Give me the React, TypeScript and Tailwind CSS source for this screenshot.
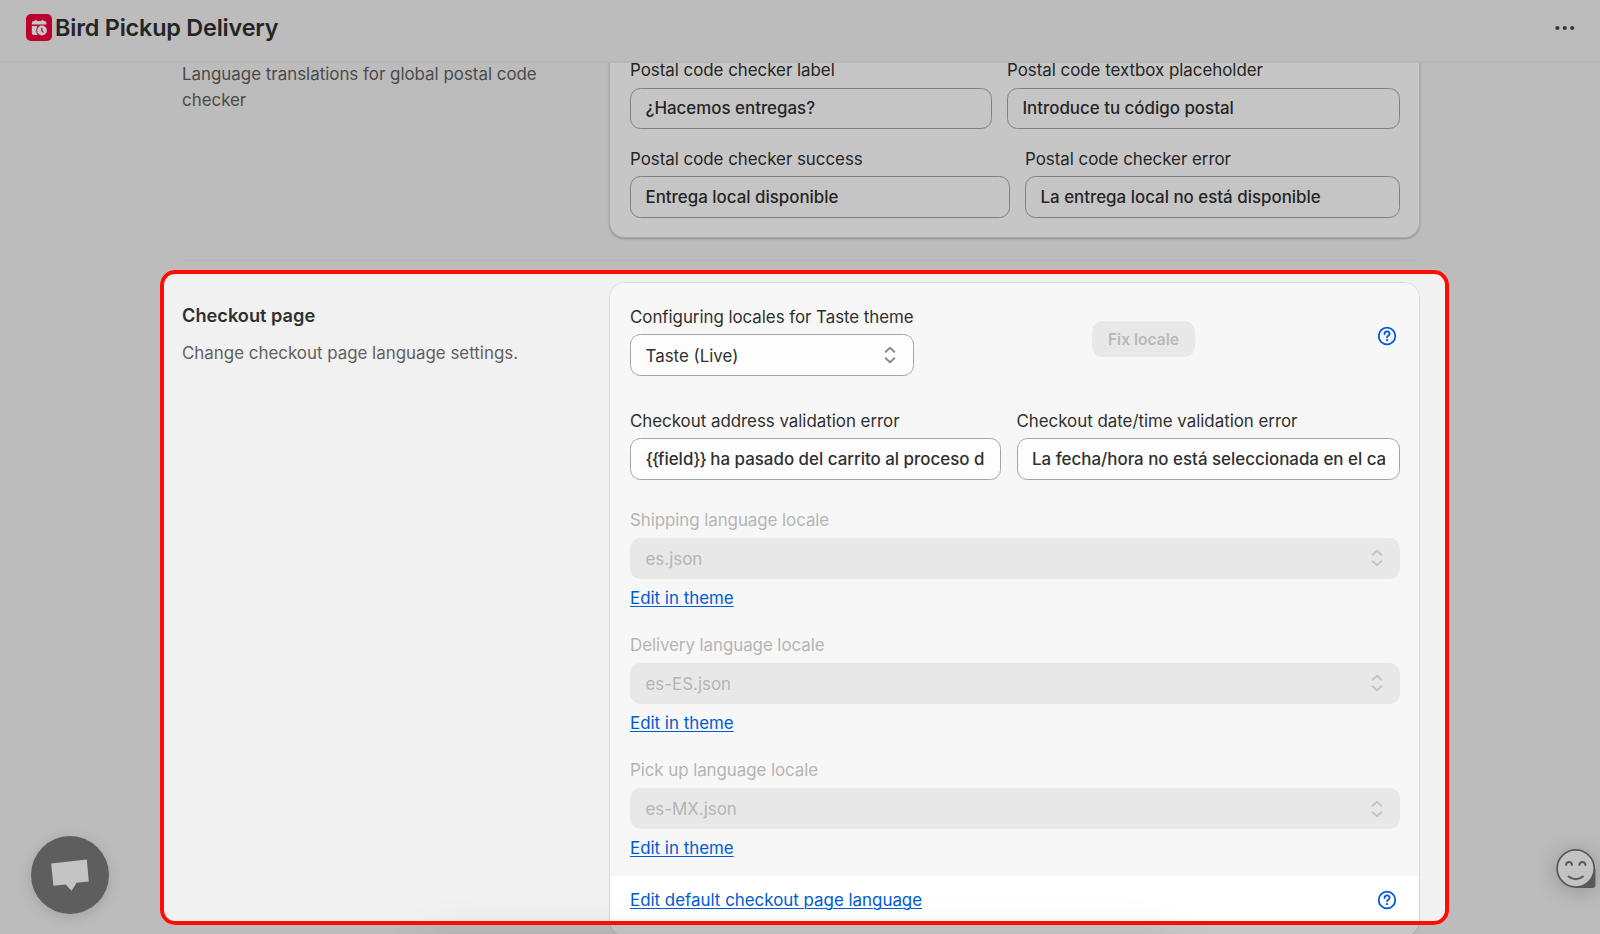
import type { ReactNode } from "react";

function SelectChevrons() {
  return (
    <svg width="12" height="18" viewBox="0 0 12 18" fill="none" stroke="currentColor" strokeWidth="1.9" strokeLinecap="round" strokeLinejoin="round" className="shrink-0">
      <path d="M1.7 5.8 6 1.7l4.3 4.1M1.7 12.2 6 16.3l4.3-4.1" />
    </svg>
  );
}

function HelpIcon() {
  return (
    <svg width="20" height="20" viewBox="0 0 20 20" fill="none" stroke="#005bd3" strokeLinecap="round" strokeLinejoin="round">
      <circle cx="10" cy="10" r="8.3" strokeWidth="1.8" />
      <path d="M7.5 8C7.5 4.6 12.6 4.7 12.6 7.8c0 2-2.5 1.9-2.5 3.5" strokeWidth="1.8" />
      <circle cx="10.05" cy="14.1" r="1.15" fill="#005bd3" stroke="none" />
    </svg>
  );
}

function Logo() {
  return (
    <svg width="26" height="27" viewBox="0 0 26 27">
      <rect width="26" height="27" rx="5" fill="#f4003f" />
      <path d="M5.8 10.6V9q0-2 2-2h1v-.4q0-.8.9-.8t.9.8V7h5v-.4q0-.8.9-.8t.9.8V7h1q2 0 2 2v1.6z" fill="#fff" />
      <path d="M5.8 12h5.6q-2.6 5 .4 9H7.8q-2 0-2-2z" fill="#fff" />
      <circle cx="16" cy="16.5" r="4.9" fill="#fff" />
      <path d="M15.8 14.4v2.4l1.4 1.3" fill="none" stroke="#f4003f" strokeWidth="1.2" strokeLinecap="round" />
    </svg>
  );
}

function Field({ label, value, className }: { label: string; value: ReactNode; className: string }) {
  return (
    <div className={`${className} flex shrink-0 flex-col gap-[4.6px]`}>
      <div className="whitespace-nowrap tracking-[-0.02px]">{label}</div>
      <div className="flex h-[41.6px] items-center rounded-[10.4px] border border-[#a3a4a6] bg-[#fdfdfd] px-[14.5px]">
        <div className="w-full overflow-hidden whitespace-nowrap font-[500]">{value}</div>
      </div>
    </div>
  );
}

function Link({ children }: { children: ReactNode }) {
  return (
    <a href="#" className="self-start whitespace-nowrap text-[#005bd3] underline decoration-[1.3px] underline-offset-[2px]">
      {children}
    </a>
  );
}

function LocaleField({ label, value }: { label: string; value: string }) {
  return (
    <div className="flex flex-col">
      <div className="tracking-[-0.06px] text-[#b5b5b5]">{label}</div>
      <div className="mt-[4.6px] mb-[6px] flex h-[41.6px] items-center justify-between rounded-[10.4px] bg-[#e8e8e8] pr-[17.5px] pl-[15.5px] text-[#c4c4c4]">
        <span className="pt-px text-[#b5b5b5]">{value}</span>
        <SelectChevrons />
      </div>
      <Link>Edit in theme</Link>
    </div>
  );
}

export default function App() {
  return (
    <div className="relative flex h-[934px] w-[1600px] flex-col overflow-hidden bg-[#f1f1f1] font-['Inter',sans-serif] text-[16.9px] leading-[26px] text-[#303030]">
      <header className="flex h-[63px] shrink-0 items-center justify-between border-b-2 border-[#ebebeb] pr-[25px] pb-[6px] pl-[26px]">
        <div className="flex items-center gap-[3px]">
          <Logo />
          <h1 className="whitespace-nowrap text-[23.4px] font-semibold leading-[30px] tracking-[-0.2px]">Bird Pickup Delivery</h1>
        </div>
        <svg width="20" height="6" viewBox="0 0 20 6" fill="#4a4a4a">
          <circle cx="2.4" cy="3" r="2.1" />
          <circle cx="9.8" cy="3" r="2.1" />
          <circle cx="17.2" cy="3" r="2.1" />
        </svg>
      </header>

      <main className="flex-1 overflow-hidden pr-[180px] pl-[182px]">
        <section className="flex items-start border-b border-[#ebebeb] pb-[21.6px]">
          <p className="-mt-[2px] w-[427px] pr-12 text-[#616161]">Language translations for global postal code checker</p>
          <div className="-mt-[6px] flex w-[811px] flex-col gap-[16.4px] rounded-b-[15.6px] border border-t-0 border-[#dcdcdc] bg-[#fefefe] pr-[19px] pb-[19.6px] pl-5 shadow-[0_1px_2px_rgba(0,0,0,0.25)]">
            <div className="flex justify-between">
              <Field label="Postal code checker label" value="¿Hacemos entregas?" className="w-[362px]" />
              <Field label="Postal code textbox placeholder" value="Introduce tu código postal" className="w-[393px]" />
            </div>
            <div className="flex justify-between">
              <Field label="Postal code checker success" value="Entrega local disponible" className="w-[380px]" />
              <Field label="Postal code checker error" value="La entrega local no está disponible" className="w-[375px]" />
            </div>
          </div>
        </section>

        <section className="flex items-start pt-[21px]">
          <div className="flex w-[427px] flex-col gap-[12.4px] pt-5">
            <h2 className="text-[18.2px] font-semibold">Checkout page</h2>
            <p className="text-[#616161]">Change checkout page language settings.</p>
          </div>
          <div className="w-[811px] overflow-hidden rounded-[15.6px] border border-[#d8d8d8] bg-white">
            <div className="bg-[#f7f7f7] pt-[20.6px] pr-[19px] pb-[15px] pl-5">
              <div className="flex items-start">
                <div className="flex w-[283.5px] flex-col gap-[4.6px]">
                  <div className="whitespace-nowrap tracking-[-0.04px]">Configuring locales for Taste theme</div>
                  <div className="flex h-[41.6px] items-center justify-between rounded-[10.4px] border border-[#a3a4a6] bg-[#fdfdfd] pr-[17px] pl-[14.5px]">
                    <span className="pt-[2px]">Taste (Live)</span>
                    <span className="text-[#8a8a8a]"><SelectChevrons /></span>
                  </div>
                </div>
                <button className="mt-[17.5px] ml-[178.5px] h-[36.4px] w-[103px] rounded-[10.4px] bg-[#e8e8e8] pt-px text-[15.6px] font-semibold whitespace-nowrap text-[#b9b9b9]">Fix locale</button>
                <div className="mt-[22.5px] ml-auto pr-[3.5px]"><HelpIcon /></div>
              </div>
              <div className="mt-[32.1px] flex justify-between">
                <Field
                  label="Checkout address validation error"
                  value={<><span className="tracking-[-1.2px]">{"{{"}</span>field<span className="tracking-[-1.2px]">{"}}"}</span> ha pasado del carrito al proceso d</>}
                  className="w-[371px]"
                />
                <Field label="Checkout date/time validation error" value="La fecha/hora no está seleccionada en el carrito" className="w-[383.5px]" />
              </div>
              <div className="mt-[27px] flex flex-col gap-[20.9px]">
                <LocaleField label="Shipping language locale" value="es.json" />
                <LocaleField label="Delivery language locale" value="es-ES.json" />
                <LocaleField label="Pick up language locale" value="es-MX.json" />
              </div>
            </div>
            <div className="flex items-center justify-between pt-[10.8px] pr-[22.5px] pb-[23px] pl-5">
              <Link>Edit default checkout page language</Link>
              <HelpIcon />
            </div>
          </div>
        </section>
      </main>

      <div className="absolute top-[836px] left-[31px] flex h-[78px] w-[78px] items-center justify-center rounded-full bg-[#797979] shadow-[0_3px_14px_rgba(0,0,0,0.14)]">
        <svg width="38" height="32" viewBox="0 0 38 32">
          <path d="M.2 4.5 35.8.5l2 22-12.2 1.2-5 8.1-6-6.4-12.2 1.4z" fill="#fcfcfc" />
        </svg>
      </div>

      <div className="absolute top-[849px] left-[1556px] h-[39px] w-[40px] rounded-tl-[20px] rounded-tr-[20px] rounded-br-[3px] rounded-bl-[20px] shadow-[0_2px_22px_rgba(0,0,0,0.22)]">
        <svg width="40" height="39" viewBox="0 0 40 39" fill="none" stroke="#737373" strokeLinecap="round">
          <path d="M20 20h19.5v16q0 3-3 3H20z" fill="#737373" stroke="none" />
          <circle cx="19.7" cy="19.5" r="18.6" fill="#fafafa" strokeWidth="1.8" />
          <path d="M10 16c.4-4 5.6-4 6 0M23.4 16c.4-4 5.6-4 6 0M12.4 27.5q7.3 5.4 14.6 0" strokeWidth="2" />
        </svg>
      </div>

      <div className="pointer-events-none absolute top-[945px] left-[430px] h-[40px] w-[740px] shadow-[0_0_50px_rgba(0,0,0,0.15)]" />

      <div className="pointer-events-none absolute top-[270px] left-[160px] h-[655px] w-[1289px] rounded-[15px] border-4 border-[#ff0d00] shadow-[0_0_0_1600px_rgba(0,0,0,0.218)]" />
    </div>
  );
}
